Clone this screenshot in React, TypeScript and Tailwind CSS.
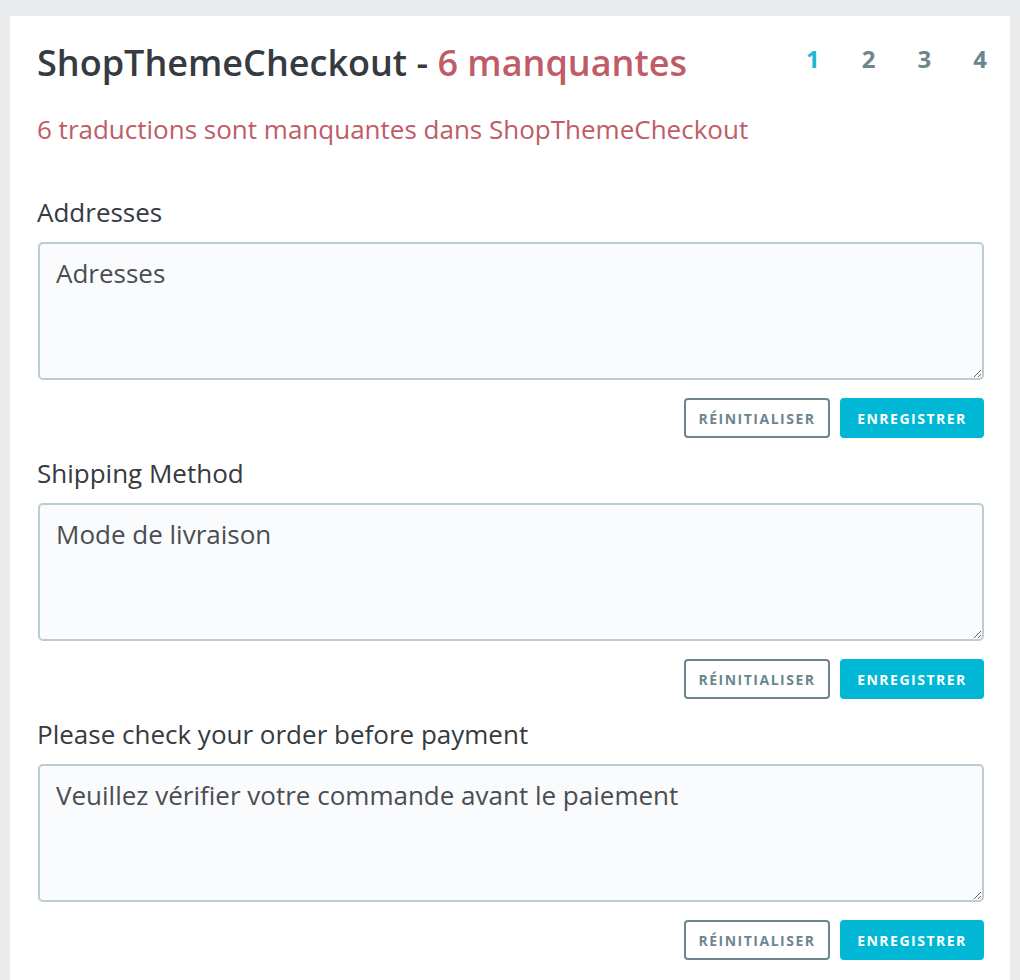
import React from "react";

const sections = [
  { label: "Addresses", value: "Adresses" },
  { label: "Shipping Method", value: "Mode de livraison" },
  { label: "Please check your order before payment", value: "Veuillez vérifier votre commande avant le paiement" },
];

export default function App() {
  return (
    <div className="min-h-[980px] bg-[#eaebed] pt-4 px-[10px] overflow-hidden" style={{ fontFamily: '"Open Sans", sans-serif' }}>
      <div className="bg-white pl-[27px] pr-[26px] pt-[26px] pb-10">
        <div className="flex items-start justify-between">
          <h1 className="text-[36px] leading-[42px] font-semibold text-[#363a41]">
            ShopThemeCheckout - <span className="text-[#c05c67]">6 manquantes</span>
          </h1>
          <div className="flex gap-[42px] pt-[1px] text-[24px] leading-[32px] font-bold text-[#6c868e] -mr-[3px]">
            <span className="text-[#1fb6d6]">1</span>
            <span>2</span>
            <span>3</span>
            <span>4</span>
          </div>
        </div>
        <p className="mt-[28px] text-[26px] leading-[34px] text-[#c05c67]">
          6 traductions sont manquantes dans ShopThemeCheckout
        </p>
        <div className="mt-[49px] flex flex-col gap-[18px]">
          {sections.map((s) => (
            <div key={s.label} className="flex flex-col">
              <label className="text-[26px] leading-[34px] text-[#363a41]">{s.label}</label>
              <textarea
                defaultValue={s.value}
                className="mt-[13px] ml-[1px] h-[138px] rounded-[5px] border-2 border-[#bbcdd2] bg-[#fafbfc] px-[16px] py-[12px] text-[26px] leading-[34px] text-[#4a4d52] outline-none"
                style={{ fontFamily: '"Open Sans", sans-serif' }}
              />
              <div className="mt-[18px] flex justify-end gap-[10px]">
                <button className="h-[40px] w-[146px] rounded-[4px] border-2 border-[#6c868e] bg-white text-[14px] font-bold tracking-[1.5px] text-[#6c868e]">
                  RÉINITIALISER
                </button>
                <button className="h-[40px] w-[144px] rounded-[4px] bg-[#00b8d6] text-[14px] font-bold tracking-[1.5px] text-white">
                  ENREGISTRER
                </button>
              </div>
            </div>
          ))}
        </div>
      </div>
    </div>
  );
}
